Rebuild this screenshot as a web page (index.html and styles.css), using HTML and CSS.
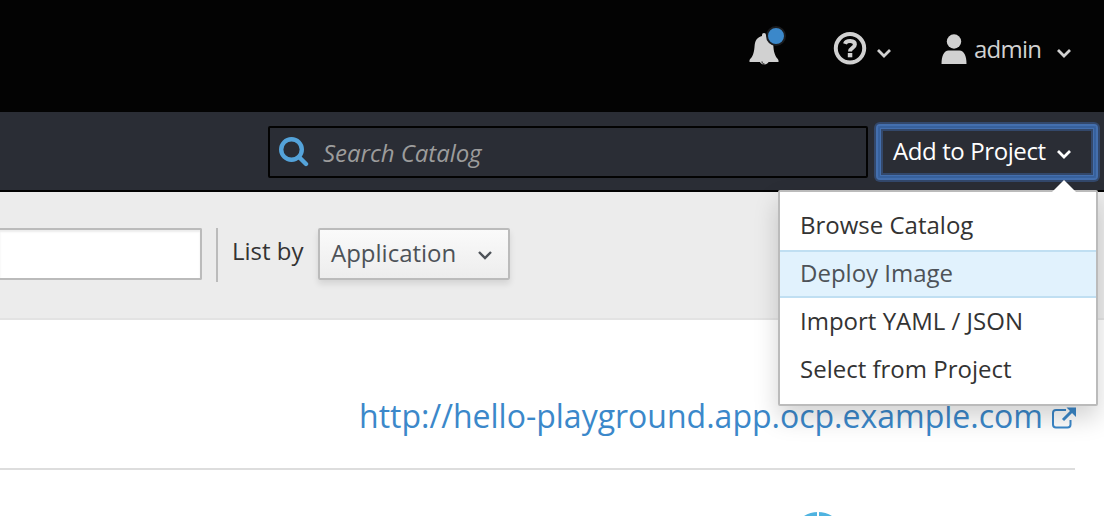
FILE: index.html
```html
<!DOCTYPE html>
<html lang="en">
<head>
<meta charset="utf-8">
<title>Project overview</title>
<link rel="stylesheet" href="styles.css">
</head>
<body>
<header class="masthead">
  <div class="notify">
    <svg class="bell" width="32" height="36" viewBox="0 0 32 36"><path d="M0.500 29.500C0.500 28 3 27 4.200 23C6.300 17 4.800 12 7.500 8.500C9 6.500 11 5.300 13 4.900V4A2 2 0 0 1 17 4V4.900C19 5.300 21 6.500 22.500 8.500C25.200 12 23.700 17 25.800 23C27 27 29.500 28 29.500 29.500V31H0.500Z"/><path d="M10.500 30A5 5 0 0 0 20 30Z"/><path class="clapper" d="M13 30.500C13 32 14 33 15.500 33"/></svg>
    <span class="badge"></span>
  </div>
  <div class="help">
    <svg class="help-icon" width="34" height="34" viewBox="0 0 34 34"><circle cx="17" cy="17.300" r="14.200"/><path d="M12 12.800C13.200 9.200 21.900 9 21.900 13.500C21.900 17 17 16.800 17 20.500"/><rect x="14.800" y="22" width="4.500" height="4.300"/></svg>
    <svg class="caret" width="16" height="12" viewBox="0 0 16 12"><path d="M2 3L8 9L14 3"/></svg>
  </div>
  <div class="user">
    <svg class="user-icon" width="26" height="32" viewBox="0 0 26 32"><circle cx="13" cy="8.500" r="7.200"/><path d="M0.500 31C0.500 23 3 17.500 7.500 17.500H18.500C23 17.500 25.500 23 25.500 31Z"/></svg>
    <span class="user-name">admin</span>
    <svg class="caret" width="16" height="12" viewBox="0 0 16 12"><path d="M2 3L8 9L14 3"/></svg>
  </div>
</header>
<nav class="catalog-bar">
  <div class="search">
    <svg class="search-icon" width="30" height="30" viewBox="0 0 30 30"><circle cx="12.500" cy="12.500" r="10.300"/><path d="M20 20L27 27"/></svg>
    <span class="search-text">Search Catalog</span>
  </div>
  <div class="add-wrap">
    <button class="add"><span class="add-label">Add to Project</span><svg class="caret" width="16" height="12" viewBox="0 0 16 12"><path d="M2 3L8 9L14 3"/></svg></button>
    <ul class="menu">
      <li class="item">Browse Catalog</li>
      <li class="item active">Deploy Image</li>
      <li class="item">Import YAML / JSON</li>
      <li class="item">Select from Project</li>
    </ul>
  </div>
</nav>
<section class="toolbar">
  <div class="filter"></div>
  <div class="divider"></div>
  <span class="list-label">List by</span>
  <button class="select"><span class="select-label">Application</span><svg class="caret" width="16" height="12" viewBox="0 0 16 12"><path d="M2 3L8 9L14 3"/></svg></button>
</section>
<main class="content">
  <div class="route">
    <a class="link">http://hello-playground.app.ocp.example.com</a>
    <svg class="external" width="26" height="24" viewBox="0 0 26 24"><path class="frame" d="M15 4H5Q2 4 2 7V18.500Q2 21.500 5 21.500H16.500Q19.500 21.500 19.500 18.500V14"/><path class="shaft" d="M12 14L22 4"/><path class="tip" d="M15.500 1.500H25V11Z"/></svg>
  </div>
  <svg class="donut" width="64" height="46" viewBox="0 0 64 46"><circle cx="32" cy="43" r="27"/><path d="M32 0V46"/></svg>
</main>
</body>
</html>
```
FILE: styles.css
```css
* { box-sizing: border-box; }
body {
  margin: 0;
  width: 1104px;
  height: 516px;
  overflow: hidden;
  background: #fff;
  color: #333;
  font: 24px/34px "Open Sans", sans-serif;
}
svg { display: block; flex: none; }
button { font: inherit; margin: 0; }
.caret { fill: none; stroke: currentColor; stroke-width: 2.800; }

.masthead {
  display: flex;
  justify-content: flex-end;
  height: 112px;
  padding: 31px 32px 0 0;
  background: #030303;
  color: #d1d1d1;
}
.notify { position: relative; width: 32px; height: 36px; margin: 0 52px 0 0; }
.bell { fill: #d1d1d1; }
.clapper { fill: none; stroke: #030303; stroke-width: 1; }
.badge {
  position: absolute;
  left: 17px;
  top: -5px;
  width: 20px;
  height: 20px;
  border: 2px solid #1b1d20;
  border-radius: 50%;
  background: #3b88ca;
}
.help { display: flex; margin-right: 49px; }
.help .caret { margin: 16px 0 0 9px; }
.help-icon { fill: none; stroke: #d1d1d1; stroke-width: 4; }
.help-icon rect { fill: #d1d1d1; stroke: none; }
.user { display: flex; }
.user-icon { fill: #d1d1d1; margin-top: 2px; }
.user-name { width: 68px; margin: 1px 14px 0 7px; letter-spacing: -.75px; white-space: nowrap; }
.user .caret { margin-top: 16px; }

.catalog-bar {
  display: flex;
  height: 80px;
  padding: 12px 6px 0 268px;
  border-bottom: 2px solid #030303;
  background: #2a2d35;
}
.search {
  display: flex;
  width: 600px;
  height: 52px;
  margin: 2px 8px 0 0;
  padding: 8px 9px;
  border: 2px solid #030303;
  border-radius: 2px;
}
.search-icon { margin-top: 1px; fill: none; stroke: #54a3da; stroke-width: 4.400; stroke-linecap: round; }
.search-text { margin-left: 14px; color: #9c9c9c; font-style: italic; letter-spacing: -.05px; white-space: nowrap; }
.add-wrap { position: relative; width: 222px; }
.add {
  display: flex;
  width: 222px;
  height: 56px;
  padding: 8px 15px;
  border: 2px solid #446fae;
  background: #2a2d35;
  color: #fff;
  border-radius: 4px;
  box-shadow: 0 0 0 2px #33486b, inset 0 0 0 2px #37619d, inset 0 0 0 3px #446fae, inset 0 0 0 5px #33486b;
}
.add-label { width: 157px; text-align: left; letter-spacing: -.4px; white-space: nowrap; }
.add .caret { margin: 14px 0 0 6px; }
.menu {
  position: absolute;
  z-index: 2;
  left: -98px;
  top: 66px;
  width: 320px;
  height: 216px;
  margin: 0;
  padding: 10px 0;
  list-style: none;
  background: #fff;
  border: 2px solid #bbb;
  border-radius: 2px;
  box-shadow: 0 12px 24px rgba(0, 0, 0, .175);
}
.menu::before {
  content: "";
  position: absolute;
  right: 20px;
  top: -12px;
  border: 12px solid transparent;
  border-top: 0;
  border-bottom-color: #fff;
}
.item { height: 48px; padding: 6px 20px; white-space: nowrap; }
.active {
  padding-top: 4px;
  border: solid #c0dff2;
  border-width: 2px 0;
  background: #e1f2fd;
  color: #4d5258;
}

.toolbar {
  display: flex;
  align-items: flex-start;
  height: 128px;
  padding-top: 36px;
  background: #ececec;
  border-bottom: 2px solid #e3e3e3;
}
.filter {
  width: 202px;
  height: 52px;
  border: 2px solid #bbb;
  border-left: 0;
  border-radius: 0 2px 2px 0;
  background: #fff;
  box-shadow: inset 0 2px 2px rgba(3, 3, 3, .075);
}
.divider { width: 2px; height: 54px; margin: 0 14px; background: #bbb; }
.list-label { width: 72px; margin: 6px 14px 0 0; white-space: nowrap; }
.select {
  display: flex;
  width: 192px;
  height: 52px;
  padding: 6px 11px;
  border: 2px solid #bbb;
  border-radius: 2px;
  background: linear-gradient(#fafafa, #ededed);
  box-shadow: 0 4px 6px rgba(3, 3, 3, .1);
  color: #4d5258;
}
.select-label { width: 126px; text-align: left; white-space: nowrap; }
.select .caret { margin: 13px 0 0 20px; stroke-width: 2.400; }

.content { height: 196px; }
.route {
  display: flex;
  width: 1077px;
  height: 150px;
  padding-left: 359px;
  background: linear-gradient(#ddd, #ddd) 0 100% / 1075px 2px no-repeat;
}
.link { margin-top: 74px; width: 692px; font-size: 32px; line-height: 44px; color: #3b88ca; white-space: nowrap; }
.external { margin-top: 86px; fill: none; stroke: #3b88ca; stroke-width: 2; }
.external .shaft { stroke-width: 3; }
.external .tip { fill: #3b88ca; stroke: none; }
.donut { margin: 25px 0 0 786px; fill: #4fb3e0; stroke: #fff; stroke-width: 2; }
```
